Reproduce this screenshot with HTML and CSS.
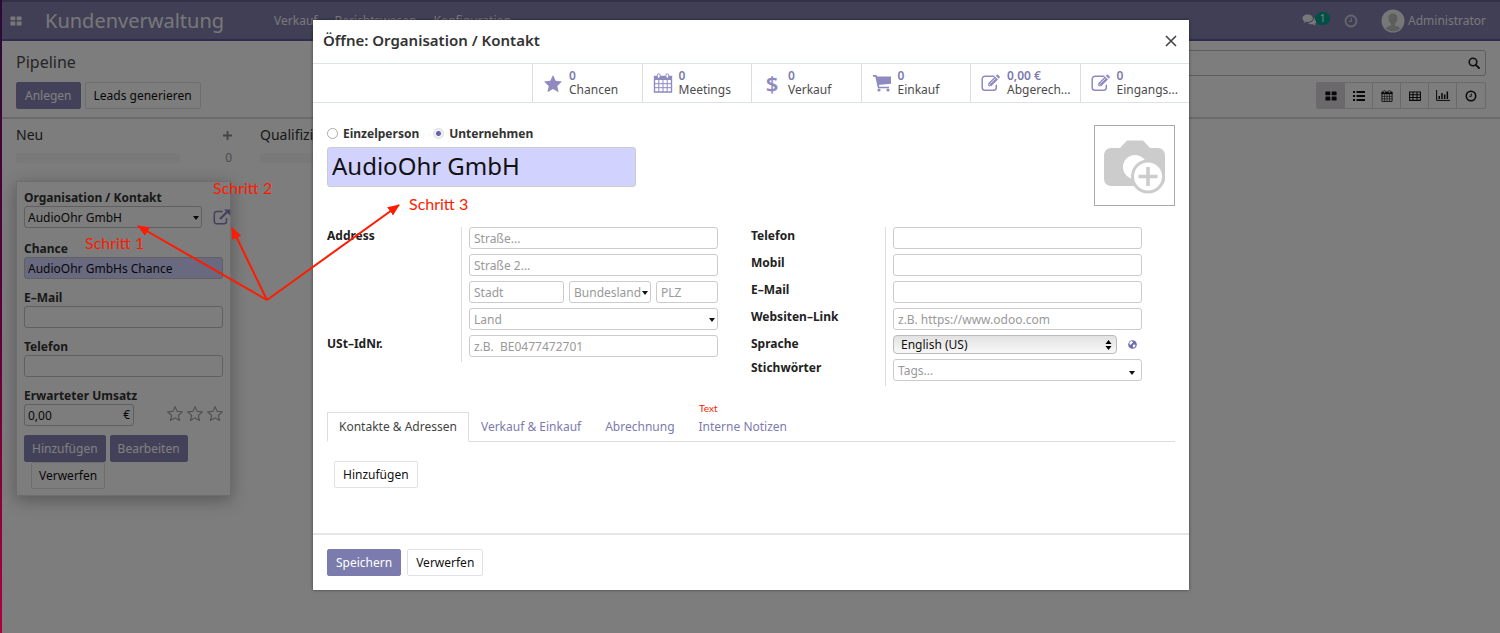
FILE: index.html
```html
<!DOCTYPE html>
<html lang="de">
<head>
<meta charset="utf-8">
<title>Kundenverwaltung – Pipeline</title>
<link rel="stylesheet" href="styles.css">
</head>
<body>
<svg class="sprite" aria-hidden="true">
  <symbol id="i-th" viewBox="0 0 14 12"><path d="M1 0.500h4.500a.7.7 0 0 1 .7.7v3.300a.7.7 0 0 1-.7.7H1a.7.7 0 0 1-.7-.7V1.200A.7.7 0 0 1 1 .5zM8.500.5H13a.7.7 0 0 1 .7.7v3.300a.7.7 0 0 1-.7.7H8.500a.7.7 0 0 1-.7-.7V1.200a.7.7 0 0 1 .7-.7zM1 6.700h4.500a.7.7 0 0 1 .7.7v3.300a.7.7 0 0 1-.7.7H1a.7.7 0 0 1-.7-.7V7.400a.7.7 0 0 1 .7-.7zM8.500 6.700H13a.7.7 0 0 1 .7.7v3.300a.7.7 0 0 1-.7.7H8.500a.7.7 0 0 1-.7-.7V7.400a.7.7 0 0 1 .7-.7z" fill="currentColor"/></symbol>
  <symbol id="i-clock" viewBox="0 0 14 14"><circle cx="7" cy="7" r="5.500" fill="none" stroke="currentColor" stroke-width="1.800"/><path d="M7.300 4v3.400H5" fill="none" stroke="currentColor" stroke-width="1.100"/></symbol>
  <symbol id="i-cal" viewBox="0 0 20 20"><path d="M1.500 3.500h17v15.500h-17z" fill="none" stroke="currentColor" stroke-width="1.400"/><path d="M1 3h18v4H1z" fill="currentColor"/><path d="M1.500 10.700h17M1.500 14.700h17M5.800 7v12M10 7v12M14.200 7v12" stroke="currentColor" stroke-width="1"/><rect x="4.300" y=".8" width="2.800" height="4.400" rx="1.400" fill="#fff" stroke="currentColor"/><rect x="12.900" y=".8" width="2.800" height="4.400" rx="1.400" fill="#fff" stroke="currentColor"/></symbol>
  <symbol id="i-edit" viewBox="0 0 20 18"><path d="M13 2.200H4A2.800 2.800 0 0 0 1.200 5v8.500A2.800 2.800 0 0 0 4 16.300h8.500a2.800 2.800 0 0 0 2.800-2.800v-2.300" fill="none" stroke="currentColor" stroke-width="1.500" stroke-linecap="round"/><path d="M7.200 9.300 14 2.500l3 3-6.800 6.800H7.200zM14.800 1.700l.7-.7a1.200 1.200 0 0 1 1.700 0l1.300 1.300a1.200 1.200 0 0 1 0 1.700l-.7.7z" fill="currentColor"/><path d="m9.300 9.500 5-5M8 10.200l1.200 1.200" stroke="#fff" stroke-width=".8"/></symbol>
  <symbol id="i-star" viewBox="0 0 20 19"><path d="m10 1 2.700 5.800 6.300.8-4.700 4.300 1.300 6.300L10 15l-5.600 3.200 1.300-6.300L1 7.600l6.300-.8z"/></symbol>
</svg>

<div class="app">
  <header class="navbar">
    <button class="plain apps" aria-label="Apps"><svg width="12" height="10"><use href="#i-th"/></svg></button>
    <a class="brand" href="#">Kundenverwaltung</a>
    <nav class="menu"><a href="#">Verkauf</a><a href="#">Berichtswesen</a><a href="#">Konfiguration</a></nav>
    <div class="systray">
      <button class="plain chat" aria-label="Nachrichten"><svg width="15" height="13" viewBox="0 0 15 13"><path d="M5.700.5C2.800.5.500 2.100.5 4.200c0 1.200.8 2.300 2 3-.1.600-.5 1.100-.9 1.600 1 0 1.900-.5 2.600-1.100.5.1 1 .1 1.500.1 2.900 0 5.200-1.600 5.200-3.600S8.600.5 5.700.5zM12 4.200c0 2.600-2.800 4.600-6.200 4.700.9.900 2.300 1.400 3.900 1.400.5 0 1 0 1.400-.1.800.7 1.700 1.200 2.700 1.200-.4-.5-.8-1-.9-1.600 1.100-.6 1.800-1.500 1.800-2.600 0-1.300-1-2.400-2.700-3z" fill="currentColor"/></svg><span class="badge">1</span></button>
      <button class="plain activity" aria-label="Aktivitäten"><svg width="14" height="14"><use href="#i-clock"/></svg></button>
      <button class="plain user"><svg width="24" height="24" viewBox="0 0 24 24"><circle cx="12" cy="12" r="11.500" fill="#eee"/><path d="M12 4.500c-3 0-4.600 2-4.500 4.700.1 2.500 1 4.400 2.500 5.500v1.800c-2 .8-4.300 1.200-5.500 3a11 11 0 0 0 15 0c-1.200-1.800-3.500-2.200-5.500-3v-1.800c1.500-1.100 2.400-3 2.500-5.500.1-2.700-1.500-4.700-4.500-4.700z" fill="#bbb"/></svg>Administrator</button>
    </div>
  </header>

  <section class="panel">
    <h1 class="crumb">Pipeline</h1>
    <label class="search"><input type="text" aria-label="Suche"><svg width="12" height="12" viewBox="0 0 12 12"><circle cx="5" cy="5" r="3.800" fill="none" stroke="currentColor" stroke-width="1.600"/><path d="m7.800 7.800 3.200 3.200" stroke="currentColor" stroke-width="1.900" stroke-linecap="round"/></svg></label>
    <div class="actions"><button class="btn primary">Anlegen</button><button class="btn">Leads generieren</button></div>
    <div class="views">
      <button class="active" aria-label="Kanban"><svg width="12" height="10"><use href="#i-th"/></svg></button>
      <button aria-label="Liste"><svg width="12" height="10" viewBox="0 0 12 10"><path d="M0 0h2v2H0zM3.500 0H12v2H3.500zM0 4h2v2H0zM3.500 4H12v2H3.500zM0 8h2v2H0zM3.500 8H12v2H3.500z" fill="currentColor"/></svg></button>
      <button aria-label="Kalender"><svg width="12" height="12"><use href="#i-cal"/></svg></button>
      <button aria-label="Pivot"><svg width="12" height="10" viewBox="0 0 12 10"><path d="M.6 1h10.800v8.400H.6zM.6 3.700h10.800M.6 6.500h10.800M4 1v8.400M8 1v8.400" fill="none" stroke="currentColor" stroke-width="1.100"/></svg></button>
      <button aria-label="Graph"><svg width="14" height="11" viewBox="0 0 14 11"><path d="M.6 0v10.400H14" fill="none" stroke="currentColor"/><path d="M2.500 6H4v3H2.500zM5.200 3h1.500v6H5.200zM7.900 4.500h1.500V9H7.900zM10.600 1.500h1.500V9h-1.500z" fill="currentColor"/></svg></button>
      <button aria-label="Aktivität"><svg width="12" height="12"><use href="#i-clock"/></svg></button>
    </div>
  </section>

  <main class="board">
    <section class="column">
      <div class="col-head"><h2>Neu</h2><button class="plain add" aria-label="Neu anlegen"><svg width="9" height="9" viewBox="0 0 9 9"><path d="M4.500 0v9M0 4.500h9" stroke="currentColor" stroke-width="1.800"/></svg></button></div>
      <div class="col-stat"><div class="bar"></div><span>0</span></div>
      <form class="card">
        <label for="org">Organisation / Kontakt</label>
        <div class="line"><div class="pick"><select id="org" class="field"><option>AudioOhr GmbH</option></select></div>
          <button type="button" class="plain open" aria-label="Öffnen"><svg width="18" height="16" viewBox="0 0 18 16"><path d="M9.500 2.500H3.500A2.200 2.200 0 0 0 1.300 4.700v7.800a2.200 2.200 0 0 0 2.200 2.200h7.800a2.200 2.200 0 0 0 2.200-2.200V9" fill="none" stroke="currentColor" stroke-width="1.500"/><path d="m7 10 7.500-7.500" stroke="currentColor" stroke-width="2.200"/><path d="M11 .5h6.300v6.300z" fill="currentColor"/></svg></button></div>
        <label for="chance">Chance</label>
        <input id="chance" class="field required" value="AudioOhr GmbHs Chance">
        <label for="mail">E–Mail</label>
        <input id="mail" class="field" type="email">
        <label for="tel">Telefon</label>
        <input id="tel" class="field" type="tel">
        <label for="umsatz">Erwarteter Umsatz</label>
        <div class="line money-line"><div class="money"><input id="umsatz" class="field" value="0,00"><span>€</span></div>
          <div class="stars"><svg width="16" height="15"><use href="#i-star"/></svg><svg width="16" height="15"><use href="#i-star"/></svg><svg width="16" height="15"><use href="#i-star"/></svg></div></div>
        <div class="card-actions"><button type="button" class="btn primary">Hinzufügen</button><button type="button" class="btn primary">Bearbeiten</button><button type="button" class="btn discard">Verwerfen</button></div>
      </form>
    </section>
    <section class="column">
      <div class="col-head"><h2>Qualifiziert</h2></div>
      <div class="col-stat"><div class="bar"></div></div>
    </section>
  </main>

  <div class="backdrop">
    <div class="modal" role="dialog" aria-labelledby="dlg">
      <header class="modal-head"><h2 id="dlg">Öffne: Organisation / Kontakt</h2><button class="plain close" aria-label="Schließen"><svg width="12" height="12" viewBox="0 0 12 12"><path d="m1 1 10 10M11 1 1 11" stroke="currentColor" stroke-width="1.600"/></svg></button></header>
      <div class="stats">
        <button class="stat"><svg class="solid" width="20" height="19"><use href="#i-star"/></svg><span><b>0</b>Chancen</span></button>
        <button class="stat"><svg width="20" height="20"><use href="#i-cal"/></svg><span><b>0</b>Meetings</span></button>
        <button class="stat"><i class="usd">$</i><span><b>0</b>Verkauf</span></button>
        <button class="stat"><svg width="20" height="18" viewBox="0 0 20 18"><path d="M1 1.800h3l2.600 11.700H17" fill="none" stroke="currentColor" stroke-width="1.700" stroke-linejoin="round"/><path d="M4.300 2.500H19v7.200L6 11z" fill="currentColor"/><circle cx="7" cy="16" r="1.600" fill="currentColor"/><circle cx="16" cy="16" r="1.600" fill="currentColor"/></svg><span><b>0</b>Einkauf</span></button>
        <button class="stat"><svg width="20" height="18"><use href="#i-edit"/></svg><span><b>0,00 €</b>Abgerech...</span></button>
        <button class="stat"><svg width="20" height="18"><use href="#i-edit"/></svg><span><b>0</b>Eingangs...</span></button>
      </div>
      <form class="sheet">
        <div class="identity">
          <div class="who">
            <div class="radios"><label><input type="radio" name="kind">Einzelperson</label><label><input type="radio" name="kind" checked>Unternehmen</label></div>
            <input class="field required name" aria-label="Name" value="AudioOhr GmbH">
          </div>
          <button type="button" class="photo" aria-label="Bild hochladen"><svg width="62" height="54" viewBox="0 0 62 54"><path d="M7 8h9l6-6.500a3 3 0 0 1 2-1h14a3 3 0 0 1 2 1L46 8h8a7 7 0 0 1 7 7v24a7 7 0 0 1-7 7H7a7 7 0 0 1-7-7V15a7 7 0 0 1 7-7z" fill="#ccc"/><circle cx="31" cy="27" r="12" fill="#fff"/><circle cx="44" cy="36.500" r="15.500" fill="#fff" stroke="#ccc" stroke-width="3"/><path d="M44 27v19M34.500 36.500h19" stroke="#ccc" stroke-width="3.600"/></svg></button>
        </div>
        <div class="groups">
          <div class="group">
            <label for="street">Address</label><div class="cell"><input id="street" class="field" placeholder="Straße..."></div>
            <span></span><div class="cell"><input class="field" aria-label="Straße 2" placeholder="Straße 2..."></div>
            <span></span><div class="cell city"><input class="field" aria-label="Stadt" placeholder="Stadt"><div class="pick"><select class="field empty" aria-label="Bundesland"><option>Bundesland</option></select></div><input class="field" aria-label="PLZ" placeholder="PLZ"></div>
            <span></span><div class="cell"><div class="pick"><select class="field empty" aria-label="Land"><option>Land</option></select></div></div>
            <label for="vat">USt–IdNr.</label><div class="cell"><input id="vat" class="field" placeholder="z.B.  BE0477472701"></div>
          </div>
          <div class="group">
            <label for="ptel">Telefon</label><div class="cell"><input id="ptel" class="field" type="tel"></div>
            <label for="pmob">Mobil</label><div class="cell"><input id="pmob" class="field" type="tel"></div>
            <label for="pmail">E–Mail</label><div class="cell"><input id="pmail" class="field" type="email"></div>
            <label for="web">Websiten–Link</label><div class="cell"><input id="web" class="field" placeholder="z.B. https://www.odoo.com"></div>
            <label for="lang">Sprache</label><div class="cell lang"><div class="native"><select id="lang"><option>English (US)</option></select><svg width="7" height="10" viewBox="0 0 7 10"><path d="M3.500 0 6.500 4h-6zM.5 6h6l-3 4z"/></svg></div><button type="button" class="plain globe" aria-label="Sprachen"><svg width="9" height="9" viewBox="0 0 9 9"><circle cx="4.500" cy="4.500" r="4.300" fill="currentColor"/><path d="M1.800 1.800 4 1l1 1.500-1.500 1.200-.8 1.200L1.300 4zM5.500 4.500l2 .2-.5 2-1.500 1-.8-1.800z" fill="#fff"/></svg></button></div>
            <label for="tags">Stichwörter</label><div class="cell"><div class="pick tags"><input id="tags" class="field" placeholder="Tags..."></div></div>
          </div>
        </div>
        <div class="tabs" role="tablist"><a class="current" href="#">Kontakte &amp; Adressen</a><a href="#">Verkauf &amp; Einkauf</a><a href="#">Abrechnung</a><a href="#">Interne Notizen</a></div>
        <div class="tab-body"><button type="button" class="btn">Hinzufügen</button></div>
      </form>
      <footer class="modal-foot"><button class="btn primary">Speichern</button><button class="btn">Verwerfen</button></footer>
    </div>
  </div>

  <svg class="notes" width="760" height="440">
    <defs><marker id="tip" viewBox="0 0 12 10" refX="11" refY="5" markerWidth="12" markerHeight="10" markerUnits="userSpaceOnUse" orient="auto"><path d="M0 0 12 5 0 10z" fill="#ff1a00"/></marker></defs>
    <g class="arrows"><path d="M265 300 136 226"/><path d="M265 300 230 228"/><path d="M265 300 397 205"/></g>
    <text x="83" y="249">Schritt 1</text>
    <text x="211" y="194">Schritt 2</text>
    <text x="407" y="210">Schritt 3</text>
    <text class="small" x="697" y="412">Text</text>
  </svg>
</div>
</body>
</html>
```

FILE: styles.css
```css
* { box-sizing: border-box; }
body { margin: 0; background: #fafafa; color: #4c4c4c; font: 12px/17px "Noto Sans", "Open Sans", sans-serif; }
button, input, select { font: inherit; color: inherit; margin: 0; }
h1, h2 { margin: 0; font-weight: 400; }
a { color: #7c7bad; text-decoration: none; }
svg { display: block; flex: none; }
.sprite { position: absolute; width: 0; height: 0; }
.plain { border: 0; padding: 0; background: none; display: flex; align-items: center; }

.app { position: relative; min-height: 100vh; overflow: hidden; border-left: 2px solid; border-image: linear-gradient(#2a0a33, #5a0038 50%, #b00040) 1; }

.navbar { display: flex; align-items: center; height: 41px; padding: 0 14px 0 8px; background: #827eaa; border-top: 2px solid #66628a; border-bottom: 2px solid #5f5b9a; color: #f0eef4; }
.apps { width: 35px; }
.brand { color: inherit; font-size: 20px; line-height: 24px; }
.menu { display: flex; gap: 17px; margin-left: 50px; }
.menu a { color: inherit; }
.systray { display: flex; align-items: center; margin-left: auto; }
.chat { margin-right: 14px; }
.badge { margin: -5px 0 0 -2px; width: 15px; border-radius: 7px; background: #00a08a; color: #fff; font-size: 10px; line-height: 13px; text-align: center; }
.activity { margin-right: 23px; opacity: .7; }
.user { gap: 3px; }

.panel { display: grid; grid-template-columns: 1fr 1fr; gap: 6px 0; align-items: center; padding: 9px 14px 8px; border-bottom: 2px solid #d4d4d4; background: #fafafa; }
.crumb { padding-bottom: 3px; font-size: 16px; line-height: 22px; }
.search { display: flex; align-items: center; height: 26px; padding-right: 5px; border: 1px solid #bbb; border-radius: 3px; color: #222; }
.search input { flex: 1; border: 0; background: none; outline: 0; }
.actions { display: flex; gap: 4px; }
.btn { height: 27px; padding: 0 8px; border: 1px solid #dee2e6; border-radius: 2px; background: #fff; color: #111; white-space: nowrap; }
.panel .btn, .card .btn { background: #fafafa; border-color: #ddd; }
.card .btn { padding: 0 7px; }
.btn.primary, .panel .btn.primary, .card .btn.primary { background: #7c7bad; border-color: #7c7bad; color: #fff; }
.panel .btn.primary, .card .btn.primary { background: #8782b4; border-color: #8782b4; }
.views { display: flex; justify-self: end; border: 1px solid #d5d5d5; border-radius: 2px; }
.views button { display: flex; align-items: center; justify-content: center; width: 28px; height: 25px; padding: 0; border: 0; border-right: 1px solid #d5d5d5; background: none; color: #111; }
.views button:last-child { border-right: 0; }
.views .active { background: #d8d3d8; }

.board { display: flex; gap: 28px; padding: 6px 14px; }
.column { width: 216px; }
.col-head { display: flex; align-items: center; justify-content: space-between; height: 20px; }
.col-head h2 { font-size: 14px; line-height: 20px; color: #333; }
.add { color: #888; }
.col-stat { display: flex; align-items: center; justify-content: space-between; height: 17px; margin: 4px 0 15px; color: #999; }
.bar { width: 164px; height: 10px; background: #f3f3f3; }
.card { width: 215px; padding: 7px 7px 6px; border: 1px solid #ddd; background: #fbfbfb; box-shadow: 0 4px 16px rgba(0, 0, 0, .3); }
.card label { display: block; font-weight: 700; color: #333; }
.card > .field { margin-bottom: 10px; }
.line { display: flex; align-items: center; }
.card > .line { margin-bottom: 12px; }
.line .pick { flex: 1; }
.open { margin: 0 -8px 0 11px; color: #8480bb; }
.field { display: block; width: 100%; height: 22px; padding: 0 4px; border: 1px solid #ccc; border-radius: 3px; background: #fff; color: #111; appearance: none; outline: 0; }
.card .field { padding: 0 3px; background: #fafafa; border-color: #c0c0c0; }
.field.required, .card .field.required { background: #d2d2ff; }
.field::placeholder { color: #999; opacity: 1; }
.field.empty { color: #999; }
.pick { position: relative; min-width: 0; }
.pick::after { content: ""; position: absolute; right: 3px; top: 10px; border: 3px solid transparent; border-top: 4px solid #111; border-bottom: 0; pointer-events: none; }
.card > .money-line { justify-content: space-between; margin-bottom: 9px; }
.money { position: relative; width: 110px; }
.money span { position: absolute; right: 4px; top: 2px; color: #111; }
.stars { display: flex; gap: 4px; padding-bottom: 3px; fill: none; stroke: #999; stroke-width: 1.300px; }
.card-actions { display: flex; flex-wrap: wrap; gap: 0 4px; }
.discard { margin-left: 7px; }

.backdrop { position: absolute; inset: 0; padding: 20px 0; background: rgba(0, 0, 0, .5); }
.modal { max-width: 876px; margin: 0 auto; background: #fff; box-shadow: 0 0 3px rgba(0, 0, 0, .5); }
.modal-head { display: flex; align-items: center; justify-content: space-between; height: 43px; padding: 0 12px 2px 10px; }
.modal-head h2 { font-size: 15px; font-weight: 600; color: #333; }
.close { color: #444; }
.stats { display: flex; justify-content: flex-end; height: 40px; border: solid #dde2e2; border-width: 1px 0; }
.stat { display: flex; align-items: center; gap: 6px; width: 12.5%; padding: 0 0 0 10px; border: 0; border-left: 1px solid #ddd; background: none; color: #8f8bc0; text-align: left; }
.stat span { color: #4c4c4c; line-height: 14px; }
.stat b { display: block; color: #7c7bad; font-weight: 600; }
.solid { fill: currentColor; }
.usd { width: 20px; text-align: center; font: 600 22px/24px "Noto Sans", sans-serif; }
.sheet { padding: 22px 14px 0; }
.identity { display: flex; justify-content: space-between; height: 81px; }
.who { width: 309px; }
.radios { display: flex; gap: 14px; height: 22px; padding-bottom: 6px; }
.radios label { display: flex; align-items: center; gap: 5px; font-weight: 700; color: #333; }
.radios input { width: 11px; height: 11px; border: 1px solid #aaa; border-radius: 50%; appearance: none; background: #fff; }
.radios input:checked { border-color: #ddd; background: radial-gradient(circle, #6664a5 2px, #f0f0f8 3px); }
.field.name { height: 40px; padding-bottom: 3px; font-size: 24px; line-height: 32px; }
.photo { display: flex; align-items: center; justify-content: center; width: 81px; height: 81px; padding: 3px 0 0; border: 1px solid #aaa; background: #fff; }
.groups { display: grid; grid-template-columns: 1fr 1fr; align-items: start; margin-top: 21px; }
.group { display: grid; grid-template-columns: 134px 1fr; padding-right: 33px; }
.group label { font-weight: 700; color: #222; }
.cell { padding: 0 0 5px 7px; border-left: 1px solid #ddd; }
.city { display: grid; grid-template-columns: 95px 82px 1fr; gap: 5px; }
.city .field { padding-right: 0; }
.lang { display: flex; align-items: center; gap: 11px; }
.native { position: relative; width: 224px; height: 19px; }
.native select { display: block; width: 100%; height: 19px; padding: 0 7px; border: 1px solid #bbb; border-radius: 4px; background: linear-gradient(#e2e2e2, #f8f8f8); color: #111; appearance: none; }
.native svg { position: absolute; right: 5px; top: 5px; pointer-events: none; }
.globe { color: #6e6bae; }
.tags::after { top: 12px; right: 7px; }
.tabs { display: flex; margin-top: 26px; border-bottom: 1px solid #ddd; }
.tabs a { height: 29px; padding: 5px 11px; border: 1px solid transparent; }
.tabs .current { height: 30px; margin-bottom: -1px; border-color: #ddd; border-bottom-color: #fff; color: #444; background: #fff; }
.tab-body { height: 91px; padding: 19px 7px; }
.modal-foot { display: flex; gap: 6px; padding: 14px; border-top: 2px solid #e5e5e5; }

.notes { position: absolute; left: 0; top: 0; pointer-events: none; font-family: Lato, sans-serif; font-size: 16px; fill: #ff1a00; }
.arrows path { fill: none; stroke: #ff1a00; stroke-width: 2; marker-end: url(#tip); }
.small { font-size: 10px; }
```
